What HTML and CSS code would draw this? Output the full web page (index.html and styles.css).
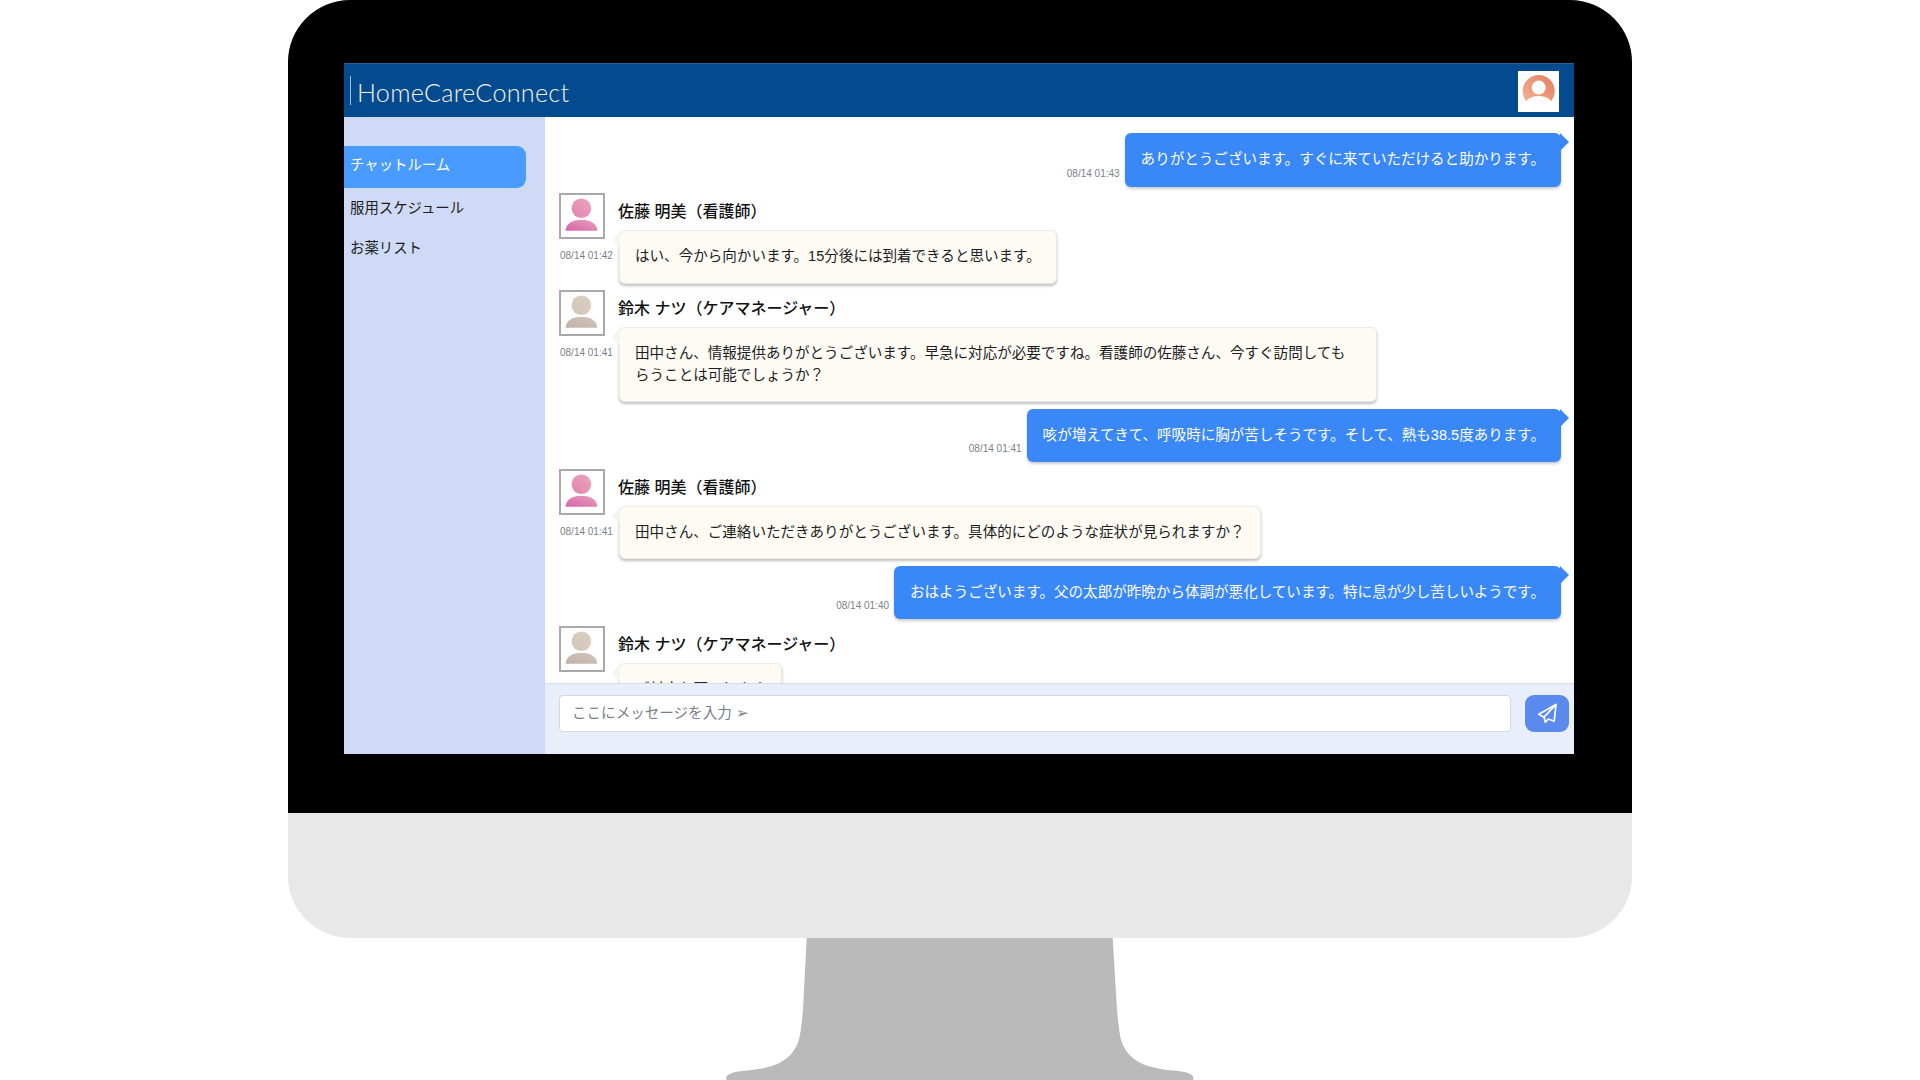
FILE: index.html
```html
<!DOCTYPE html>
<html lang="ja">
<head>
<meta charset="utf-8">
<title>HomeCareConnect</title>
<link rel="stylesheet" href="styles.css">
</head>
<body>
<svg class="defs" width="0" height="0" aria-hidden="true">
  <defs>
    <linearGradient id="pinkHead" x1="0" y1="1" x2="1" y2="0"><stop offset="0" stop-color="#e284b2"/><stop offset="1" stop-color="#e9a6ba"/></linearGradient>
    <linearGradient id="pinkBody" x1="0" y1="1" x2="1" y2="0"><stop offset="0" stop-color="#d565ad"/><stop offset="1" stop-color="#e9a0b8"/></linearGradient>
    <linearGradient id="beigeHead" x1="0" y1="1" x2="1" y2="0"><stop offset="0" stop-color="#d3c5b9"/><stop offset="1" stop-color="#dbcfc0"/></linearGradient>
    <linearGradient id="beigeBody" x1="0" y1="1" x2="1" y2="0"><stop offset="0" stop-color="#bfb0aa"/><stop offset="1" stop-color="#d3c6b8"/></linearGradient>
    <linearGradient id="orange" x1="0" y1="1" x2="1" y2="0"><stop offset="0" stop-color="#f5b598"/><stop offset="1" stop-color="#e57e60"/></linearGradient>
    <symbol id="nurse" viewBox="0 0 42 42">
      <circle cx="20.4" cy="13.3" r="9.8" fill="url(#pinkHead)"/>
      <path d="M4.6 35.8C4.6 29 11 24.7 20.4 24.7S36.3 29 36.3 35.8Z" fill="url(#pinkBody)"/>
    </symbol>
    <symbol id="manager" viewBox="0 0 42 42">
      <circle cx="20.4" cy="13.3" r="9.8" fill="url(#beigeHead)"/>
      <path d="M4.6 35.8C4.6 29 11 24.7 20.4 24.7S36.3 29 36.3 35.8Z" fill="url(#beigeBody)"/>
    </symbol>
  </defs>
</svg>

<div class="monitor">
  <div class="bezel">
    <div class="screen">
      <header class="topbar">
        <div class="brand"><span class="brand-text">HomeCareConnect</span></div>
        <div class="user-avatar">
          <svg width="41" height="41" viewBox="0 0 41 41">
            <circle cx="20.7" cy="20" r="16" fill="url(#orange)"/>
            <circle cx="20.7" cy="16.6" r="7" fill="#fff"/>
            <ellipse cx="20.7" cy="32" rx="12.5" ry="7" fill="#fff"/>
          </svg>
        </div>
      </header>
      <div class="main">
        <nav class="sidebar">
          <a class="nav-item nav-active">チャットルーム</a>
          <a class="nav-item">服用スケジュール</a>
          <a class="nav-item">お薬リスト</a>
        </nav>
        <section class="chat">
          <div class="log">
            <div class="msg-out">
              <span class="time">08/14 01:43</span>
              <p class="bubble bubble-out">ありがとうございます。すぐに来ていただけると助かります。</p>
            </div>
            <div class="msg-in">
              <div class="sender">
                <svg class="avatar"><use href="#nurse"/></svg>
                <span class="name">佐藤 明美（看護師）</span>
              </div>
              <div class="body">
                <span class="time time-in">08/14 01:42</span>
                <p class="bubble bubble-in">はい、今から向かいます。15分後には到着できると思います。</p>
              </div>
            </div>
            <div class="msg-in">
              <div class="sender">
                <svg class="avatar"><use href="#manager"/></svg>
                <span class="name">鈴木 ナツ（ケアマネージャー）</span>
              </div>
              <div class="body">
                <span class="time time-in">08/14 01:41</span>
                <p class="bubble bubble-in bubble-wide">田中さん、情報提供ありがとうございます。早急に対応が必要ですね。看護師の佐藤さん、今すぐ訪問しても<br>らうことは可能でしょうか？</p>
              </div>
            </div>
            <div class="msg-out">
              <span class="time">08/14 01:41</span>
              <p class="bubble bubble-out">咳が増えてきて、呼吸時に胸が苦しそうです。そして、熱も38.5度あります。</p>
            </div>
            <div class="msg-in">
              <div class="sender">
                <svg class="avatar"><use href="#nurse"/></svg>
                <span class="name">佐藤 明美（看護師）</span>
              </div>
              <div class="body">
                <span class="time time-in">08/14 01:41</span>
                <p class="bubble bubble-in">田中さん、ご連絡いただきありがとうございます。具体的にどのような症状が見られますか？</p>
              </div>
            </div>
            <div class="msg-out">
              <span class="time">08/14 01:40</span>
              <p class="bubble bubble-out">おはようございます。父の太郎が昨晩から体調が悪化しています。特に息が少し苦しいようです。</p>
            </div>
            <div class="msg-in">
              <div class="sender">
                <svg class="avatar"><use href="#manager"/></svg>
                <span class="name">鈴木 ナツ（ケアマネージャー）</span>
              </div>
              <div class="body">
                <span class="time time-in">08/14 01:40</span>
                <p class="bubble bubble-in">ご対応お願いします</p>
              </div>
            </div>
          </div>
          <form class="composer">
            <input class="composer-input" type="text" placeholder="ここにメッセージを入力 ➢">
            <button class="send" type="button" aria-label="送信">
              <svg width="44" height="37" viewBox="0 0 44 37" fill="none" stroke="#fff" stroke-width="1.7" stroke-linejoin="round" stroke-linecap="round">
                <path d="M31 9.5 13.8 19.3 19 22.2 20.4 27.2 23.2 24 29.2 26.2Z"/>
                <path d="M19 22.2 31 9.5"/>
              </svg>
            </button>
          </form>
        </section>
      </div>
    </div>
  </div>
  <div class="chin"></div>
</div>
<svg class="stand" width="468" height="142" viewBox="726 938 468 142">
  <path fill="#bababa" d="M806.7 938H1112.7L1117 1010C1119 1030 1120 1040 1124 1047C1134 1066 1156 1069 1178 1071C1187 1072 1193 1074 1193.5 1078L1193 1080H726.5L726 1078C727 1074 733 1072 742 1071C764 1069 786 1066 796 1047C800 1040 801 1030 803 1010Z"/>
</svg>
</body>
</html>
```
FILE: styles.css
```css
* {
  box-sizing: border-box;
}

html,
body {
  margin: 0;
  height: 1080px;
  overflow: hidden;
  background: #fff;
}

body {
  font-family: "Liberation Sans", "Noto Sans CJK JP", sans-serif;
  font-size: 14.55px;
  line-height: 21.6px;
  color: #1d1d1d;
}

.defs {
  position: absolute;
}

.monitor {
  width: 1344px;
  margin: 0 auto;
}

.bezel {
  height: 813px;
  padding: 63px 58px 59px 56px;
  background: #000;
  border-radius: 62px 62px 0 0;
}

.chin {
  height: 125px;
  background: #e8e8e8;
  border-radius: 0 0 62px 62px;
}

.stand {
  display: block;
  margin: 0 auto;
}

.screen {
  display: flex;
  flex-direction: column;
  height: 691px;
  background: #fff;
}

.topbar {
  display: flex;
  align-items: center;
  justify-content: space-between;
  flex: none;
  height: 54px;
  padding: 0 15px 0 6px;
  background: #034a8f;
  border-top: 1px solid #2d5f96;
}

.brand {
  height: 29px;
  padding-left: 6px;
  border-left: 1px solid #a9bdd2;
}

.brand-text {
  display: block;
  padding-top: 2px;
  font-family: "Lato", sans-serif;
  font-size: 25.2px;
  font-weight: 300;
  line-height: 29px;
  letter-spacing: 0.25px;
  color: #f4f3e8;
}

.user-avatar {
  width: 41px;
  height: 41px;
  margin-top: 1px;
  background: #fff;
}

.user-avatar svg {
  display: block;
}

.main {
  display: flex;
  flex: 1;
  min-height: 0;
}

.sidebar {
  display: flex;
  flex: none;
  flex-direction: column;
  width: 200.5px;
  padding: 29px 18.5px 0 0;
  background: #cfdbf6;
}

.nav-item {
  height: 40px;
  padding: 10px 6px 0;
  font-size: 14.4px;
  color: #1d1d1d;
}

.nav-active {
  height: 42px;
  padding-top: 9px;
  background: #4a9bff;
  border-radius: 0 9px 9px 0;
  color: #fff;
}

.chat {
  display: flex;
  flex: 1;
  flex-direction: column;
  min-width: 0;
}

.log {
  display: flex;
  flex: 1;
  flex-direction: column;
  gap: 6.4px;
  min-height: 0;
  padding: 16px 13px 0 14.5px;
  overflow: hidden;
}

.msg-out {
  display: flex;
  flex: none;
  align-items: flex-end;
  justify-content: flex-end;
  gap: 5px;
}

.msg-in {
  flex: none;
}

.sender {
  display: flex;
  gap: 13px;
  align-items: center;
  height: 37px;
}

.avatar {
  position: relative;
  z-index: 1;
  flex: none;
  align-self: flex-start;
  width: 46px;
  height: 46px;
  background: #fff;
  border: 2px solid #a9a9a9;
}

.name {
  padding-top: 1px;
  font-size: 16px;
  font-weight: 500;
  color: #111;
}

.body {
  display: flex;
  align-items: flex-start;
}

.time {
  margin-bottom: 7px;
  font-size: 10px;
  line-height: 12px;
  color: #7b7f85;
  white-space: nowrap;
}

.time-in {
  flex: none;
  width: 59px;
  margin: 20.5px 0 0 1px;
}

.bubble {
  position: relative;
  margin: 0;
  border-radius: 6px;
}

.bubble-out {
  padding: 16px;
  background: #3a88f8;
  box-shadow: 0 2px 3px rgba(0, 0, 0, 0.2);
  color: #fff;
}

.bubble-out::after {
  content: "";
  position: absolute;
  top: 0;
  right: -8px;
  width: 0;
  height: 0;
  border-top: 9px solid transparent;
  border-bottom: 9px solid transparent;
  border-left: 9px solid #3a88f8;
}

.bubble-in {
  padding: 15px;
  background: #fefbf5;
  border: 1px solid #ece9e3;
  box-shadow: 0 2px 3px rgba(0, 0, 0, 0.25);
  color: #1d1d1d;
}

.bubble-in::before {
  content: "";
  position: absolute;
  top: 1px;
  left: -8px;
  width: 0;
  height: 0;
  border-top: 8px solid transparent;
  border-bottom: 8px solid transparent;
  border-right: 8px solid #f4f4f0;
}

.bubble-wide {
  width: 758px;
}

.composer {
  display: flex;
  flex: none;
  gap: 14px;
  height: 71px;
  padding: 11px 5px 0 14.5px;
  background: #e8effb;
  border-top: 1px solid #d6dce6;
}

.composer-input {
  flex: 1;
  min-width: 0;
  height: 37px;
  padding: 0 12px 2px;
  background: #fff;
  border: 1px solid #d3d9e4;
  border-radius: 4px;
  font: inherit;
  color: #1d1d1d;
}

.composer-input::placeholder {
  color: #777f88;
  opacity: 1;
}

.send {
  flex: none;
  width: 44px;
  height: 37px;
  padding: 0;
  background: #5b8aee;
  border: 0;
  border-radius: 9px;
}

.send svg {
  display: block;
}
```
